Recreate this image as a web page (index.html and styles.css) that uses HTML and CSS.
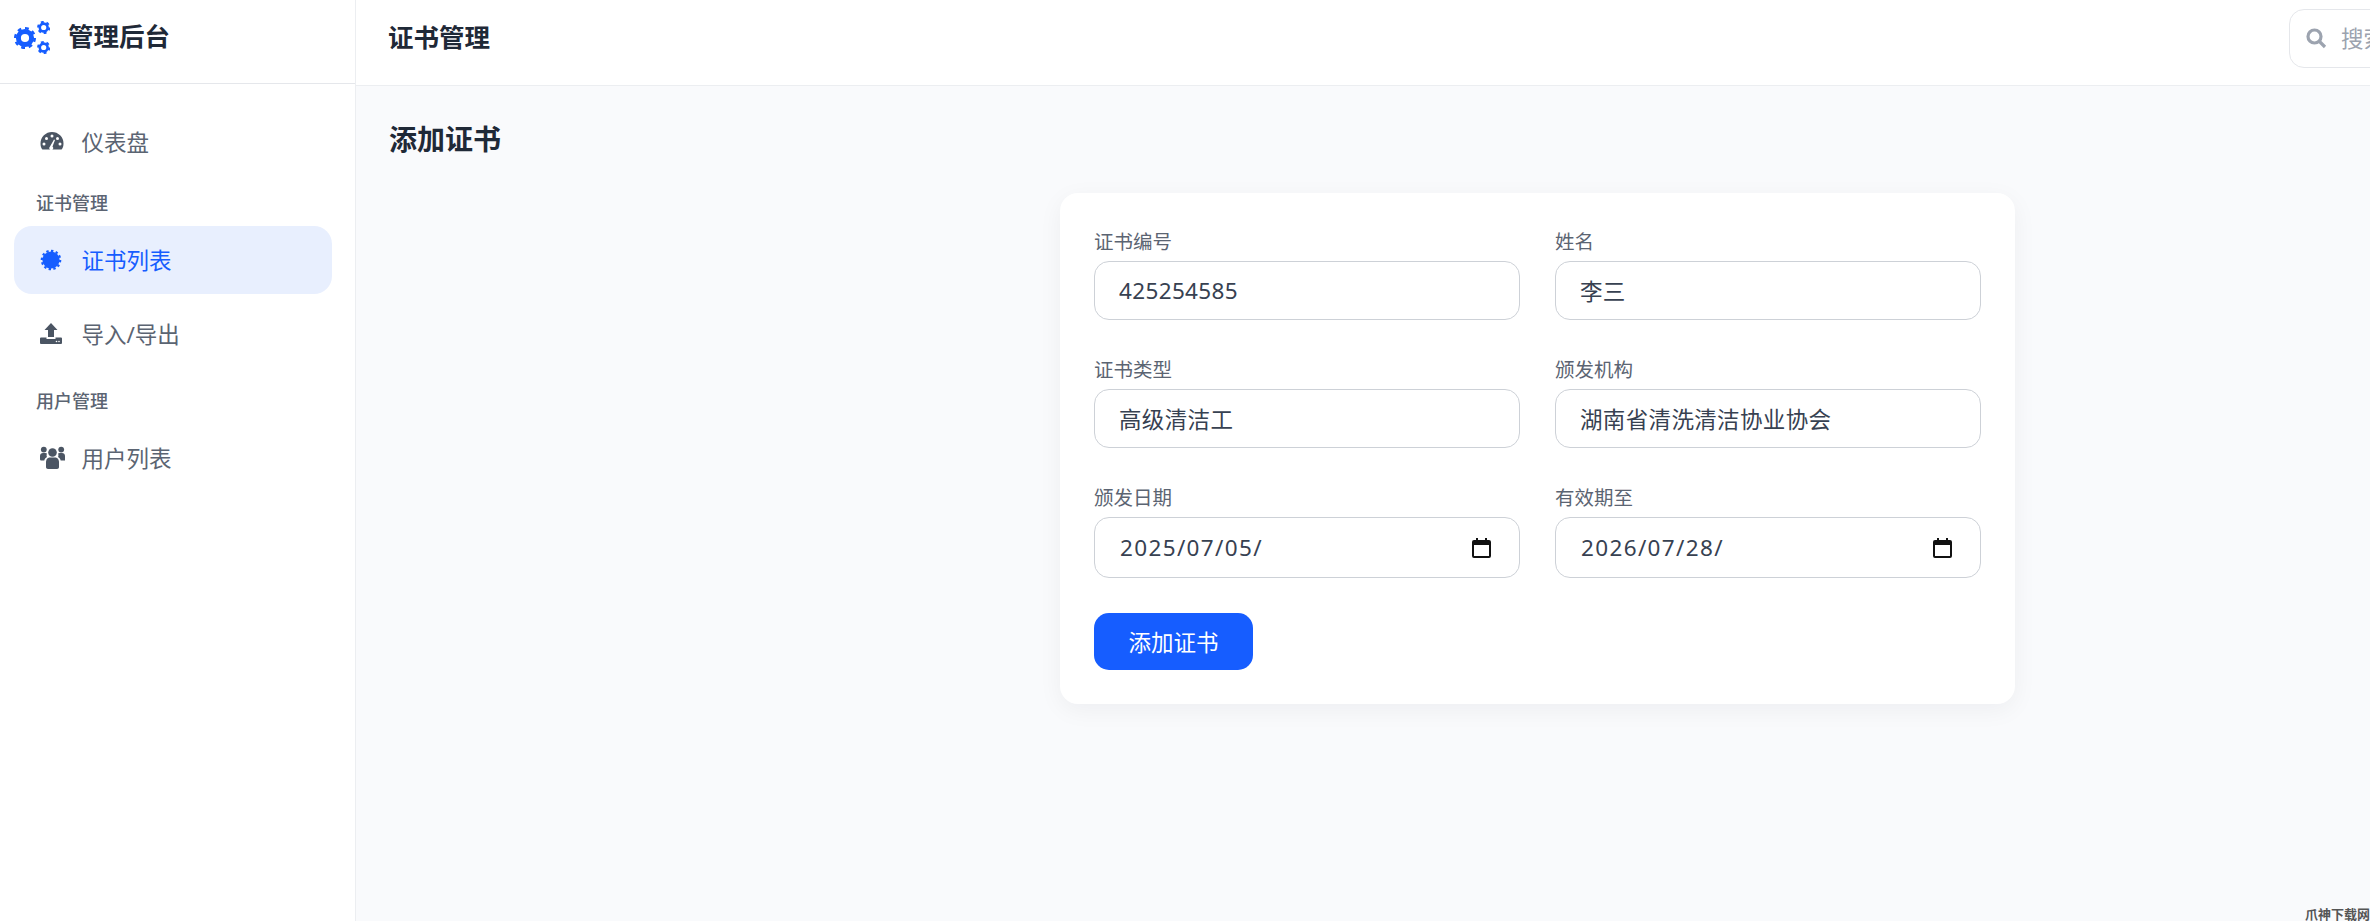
FILE: index.html
```html
<!DOCTYPE html>
<html lang="zh-CN">
<head>
<meta charset="utf-8">
<title>证书管理</title>
<link rel="stylesheet" href="styles.css">
</head>
<body>
<div class="app">
  <aside class="sidebar">
    <div class="brand">
      <svg class="brand-icon" viewBox="0 0 36 33" aria-hidden="true">
        <g class="gear" transform="translate(11 17)">
          <circle class="gear-body" r="6.6"/>
          <circle class="gear-teeth" r="9.7" pathLength="16"/>
        </g>
        <g class="gear gear-sm" transform="translate(29.700 6.500)">
          <circle class="gear-body" r="3.900"/>
          <circle class="gear-teeth" r="5.600" pathLength="12"/>
        </g>
        <g class="gear gear-sm" transform="translate(29.700 26.500)">
          <circle class="gear-body" r="3.900"/>
          <circle class="gear-teeth" r="5.600" pathLength="12"/>
        </g>
      </svg>
      <span class="brand-name">管理后台</span>
    </div>
    <nav class="nav">
      <a class="nav-item">
        <span class="nav-icon">
          <svg class="ic" width="24" height="20" viewBox="0 0 24 20" aria-hidden="true">
            <path d="M2.4 18.5C1 16.8.5 14.700.5 12.500a11.500 11.500 0 0 1 23 0c0 2.200-.5 4.300-1.900 6z"/>
            <circle class="ic-hole" cx="12" cy="5" r="1.500"/>
            <circle class="ic-hole" cx="6.500" cy="7.500" r="1.500"/>
            <circle class="ic-hole" cx="4" cy="13" r="1.500"/>
            <circle class="ic-hole" cx="20" cy="13" r="1.500"/>
            <circle class="ic-hole" cx="17.500" cy="7.500" r="1.500"/>
            <path class="ic-hole" d="M10 15.500l4-7 1 .5-2.500 6.500a2 2 0 1 1-2.500 0z"/>
          </svg>
        </span>
        <span>仪表盘</span>
      </a>
      <div class="nav-group">证书管理</div>
      <a class="nav-item is-active">
        <span class="nav-icon">
          <svg class="ic" width="22" height="22" viewBox="0 0 22 22" aria-hidden="true">
            <circle cx="11" cy="11" r="8.600"/>
            <circle class="badge-teeth" cx="11" cy="11" r="9.200" pathLength="24"/>
          </svg>
        </span>
        <span>证书列表</span>
      </a>
      <a class="nav-item">
        <span class="nav-icon">
          <svg class="ic" width="22" height="21" viewBox="0 0 22 21" aria-hidden="true">
            <path d="M11 0l6.500 7H14v7H8V7H4.500z"/>
            <path d="M1 14.500h5.500V16h9v-1.500H21a1 1 0 0 1 1 1V20a1 1 0 0 1-1 1H1a1 1 0 0 1-1-1v-4.500a1 1 0 0 1 1-1z"/>
            <circle class="ic-hole" cx="16.500" cy="18.500" r=".8"/>
            <circle class="ic-hole" cx="19" cy="18.500" r=".8"/>
          </svg>
        </span>
        <span>导入/导出</span>
      </a>
      <div class="nav-group nav-group-lower">用户管理</div>
      <a class="nav-item">
        <span class="nav-icon">
          <svg class="ic" width="25" height="23" viewBox="0 0 25 23" aria-hidden="true">
            <circle cx="12.500" cy="6.500" r="4.300"/>
            <circle cx="3.800" cy="3.600" r="2.900"/>
            <circle cx="21.200" cy="3.600" r="2.900"/>
            <path d="M6 16c0-3.500 2.500-4.600 3.700-4.600h5.600c1.200 0 3.700 1.100 3.700 4.600v5c0 1-.8 2-2 2H8c-1.200 0-2-1-2-2z"/>
            <path d="M0 10c0-1.800 1.200-3 3-3h2.300c.6 0 1.200.2 1.700.5-.6 1.200-.5 2.400 0 3.500-1.500.7-2.500 2-2.700 3.500H1.500C.6 14.500 0 14 0 13z"/>
            <path d="M25 10c0-1.800-1.200-3-3-3h-2.300c-.6 0-1.200.2-1.700.5.6 1.200.5 2.400 0 3.500 1.500.7 2.500 2 2.700 3.500h3.800c.9 0 1.500-.5 1.500-1.500z"/>
          </svg>
        </span>
        <span>用户列表</span>
      </a>
    </nav>
  </aside>
  <div class="content">
    <header class="topbar">
      <h1 class="topbar-title">证书管理</h1>
      <label class="search">
        <svg class="search-icon" viewBox="0 0 21 21" aria-hidden="true">
          <circle cx="8.500" cy="8.500" r="6.500"/>
          <path d="M13.500 13.500L19 19"/>
        </svg>
        <input class="search-input" type="text" placeholder="搜索证书...">
      </label>
    </header>
    <main class="main">
      <h2 class="page-title">添加证书</h2>
      <form class="card">
        <div class="form-grid">
          <div class="field">
            <label class="field-label">证书编号</label>
            <input class="input" type="text" value="425254585">
          </div>
          <div class="field">
            <label class="field-label">姓名</label>
            <input class="input" type="text" value="李三">
          </div>
          <div class="field">
            <label class="field-label">证书类型</label>
            <input class="input" type="text" value="高级清洁工">
          </div>
          <div class="field">
            <label class="field-label">颁发机构</label>
            <input class="input" type="text" value="湖南省清洗清洁协业协会">
          </div>
          <div class="field">
            <label class="field-label">颁发日期</label>
            <div class="date">
              <input class="date-input" type="text" value="2025/07/05/">
              <svg class="cal" viewBox="0 0 19 20" aria-hidden="true">
                <path d="M4 0h2v2h7V0h2v2h2a2 2 0 0 1 2 2v14a2 2 0 0 1-2 2H2a2 2 0 0 1-2-2V4a2 2 0 0 1 2-2h2zM2 7v11h15V7z"/>
              </svg>
            </div>
          </div>
          <div class="field">
            <label class="field-label">有效期至</label>
            <div class="date">
              <input class="date-input" type="text" value="2026/07/28/">
              <svg class="cal" viewBox="0 0 19 20" aria-hidden="true">
                <path d="M4 0h2v2h7V0h2v2h2a2 2 0 0 1 2 2v14a2 2 0 0 1-2 2H2a2 2 0 0 1-2-2V4a2 2 0 0 1 2-2h2zM2 7v11h15V7z"/>
              </svg>
            </div>
          </div>
        </div>
        <button class="submit" type="button">添加证书</button>
      </form>
    </main>
  </div>
</div>
<div class="watermark">爪神下载网</div>
</body>
</html>
```
FILE: styles.css
```css
* { box-sizing: border-box; }
html, body { margin: 0; height: 100%; overflow: hidden; }
body {
  font-family: "Noto Sans", "Noto Sans CJK SC", sans-serif;
  color: #1f2937;
  background: #f9fafc;
  position: relative;
}
.app { display: flex; width: 2719px; height: 921px; }

/* Sidebar */
.sidebar {
  width: 356px;
  flex-shrink: 0;
  background: #fff;
  border-right: 1px solid #eceef1;
}
.brand {
  height: 84px;
  display: flex;
  align-items: center;
  gap: 18px;
  padding-left: 14px;
  padding-bottom: 9px;
  border-bottom: 1px solid #e5e7eb;
}
.brand-icon { width: 36px; height: 33px; flex-shrink: 0; }
.brand-name { font-size: 25.5px; font-weight: 700; color: #1f2937; line-height: 1; }
.gear-body { fill: none; stroke: #165dff; stroke-width: 5; }
.gear-teeth { fill: none; stroke: #165dff; stroke-width: 2.6; stroke-dasharray: 1 1; }
.gear-sm .gear-body { stroke-width: 2.6; }
.gear-sm .gear-teeth { stroke-width: 2; }

.nav { padding: 23px 23px 0 14px; display: flex; flex-direction: column; }
.nav-item {
  height: 68px;
  flex-shrink: 0;
  display: flex;
  align-items: center;
  margin-bottom: 6px;
  padding-left: 25.5px;
  border-radius: 18px;
  font-size: 22.5px;
  color: #5b6472;
}
.nav-icon {
  width: 42px;
  flex-shrink: 0;
  display: flex;
  align-items: center;
}
.ic { fill: #4b5563; display: block; }
.ic-hole { fill: #fff; }
.is-active { background: #e8effe; color: #165dff; }
.is-active .ic { fill: #165dff; }
.badge-teeth { fill: none; stroke: #165dff; stroke-width: 2.2; stroke-dasharray: 1 1; }
.nav-group {
  font-size: 18px;
  line-height: 27px;
  font-weight: 500;
  color: #5b6472;
  padding-left: 22px;
  margin: 8.5px 0 9px;
}
.nav-group-lower { margin: 14px 0 9px; }

/* Top bar */
.content { flex: 1; min-width: 0; display: flex; flex-direction: column; }
.topbar {
  height: 86px;
  flex-shrink: 0;
  background: #fff;
  border-bottom: 1px solid #eceef1;
  display: flex;
  align-items: center;
  justify-content: space-between;
  padding: 0 32px;
}
.topbar-title { margin: -9px 0 0; font-size: 25.5px; font-weight: 700; color: #1f2937; line-height: 1.4; }
.search {
  width: 398px;
  height: 59px;
  display: flex;
  align-items: center;
  gap: 14px;
  padding-left: 16px;
  border: 1px solid #e5e7eb;
  border-radius: 15px;
  background: #fff;
  margin-top: -9px;
}
.search-icon { width: 21px; height: 21px; fill: none; stroke: #9ca3af; stroke-width: 3.2; flex-shrink: 0; }
.search-input {
  flex: 1;
  min-width: 0;
  border: 0;
  outline: 0;
  padding: 0;
  font: inherit;
  font-size: 22.5px;
  background: transparent;
}
.search-input::placeholder { color: #9ca3af; opacity: 1; }

/* Main */
.main { flex: 1; padding: 34px 32px 0; }
.page-title { margin: 0 0 35px; padding-left: 1px; font-size: 28px; line-height: 38px; font-weight: 700; color: #1f2937; }
.card {
  width: 955px;
  margin: 0 auto;
  padding: 34px;
  background: #fff;
  border-radius: 18px;
  box-shadow: 0 6px 24px rgba(17, 24, 39, .05);
}
.form-grid {
  display: grid;
  grid-template-columns: 426px 426px;
  column-gap: 35px;
  row-gap: 35px;
}
.field { display: flex; flex-direction: column; }
.field-label { font-size: 19.5px; line-height: 29px; color: #5b6472; margin-bottom: 5px; }
.input, .date-input {
  font: inherit;
  font-size: 22.5px;
  color: #374151;
  outline: 0;
}
.input {
  height: 59px;
  width: 100%;
  padding: 0 24px;
  border: 1px solid #cdd1d7;
  border-radius: 15px;
  background: #fff;
  letter-spacing: .35px;
}
.date {
  height: 61px;
  display: flex;
  align-items: center;
  padding: 0 28px 0 25px;
  border: 1px solid #cdd1d7;
  border-radius: 15px;
}
.date-input { flex: 1; min-width: 0; border: 0; padding: 0; background: transparent; letter-spacing: 1.35px; }
.cal { width: 19px; height: 20px; fill: #111; flex-shrink: 0; }
.submit {
  display: block;
  width: 159px;
  height: 57px;
  margin-top: 35px;
  border: 0;
  border-radius: 15px;
  background: #165dff;
  color: #fff;
  font: inherit;
  font-size: 22.5px;
  padding: 0;
}

.watermark {
  position: absolute;
  right: 0;
  bottom: 0;
  font-size: 13px;
  line-height: 13px;
  font-weight: 700;
  color: #555;
  white-space: nowrap;
}
```
